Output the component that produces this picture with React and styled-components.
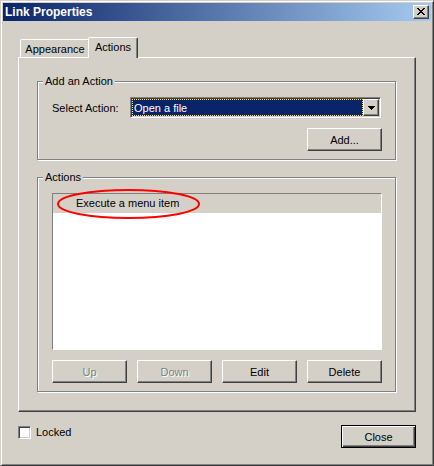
import React from 'react';
import styled, { createGlobalStyle, css } from 'styled-components';

const GlobalStyle = createGlobalStyle`
  html, body {
    margin: 0;
    padding: 0;
    background: #d4d0c8;
  }
  body {
    font-family: "Liberation Sans", Arial, sans-serif;
    font-size: 11px;
    color: #000;
  }
  * {
    box-sizing: border-box;
  }
`;

const raised = css`
  border: 1px solid;
  border-color: #fff #404040 #404040 #fff;
  box-shadow: inset -1px -1px 0 #808080;
`;

const sunken = css`
  border: 1px solid;
  border-color: #808080 #fff #fff #808080;
  box-shadow: inset 1px 1px 0 #404040, inset -1px -1px 0 #d4d0c8;
`;

const Window = styled.div`
  width: 434px;
  height: 466px;
  padding: 2px;
  background: #d4d0c8;
  border: 1px solid;
  border-color: #d4d0c8 #404040 #404040 #d4d0c8;
  box-shadow: inset 1px 1px 0 #fff, inset -1px -1px 0 #808080;
  display: flex;
  flex-direction: column;
`;

const TitleBar = styled.div`
  height: 18px;
  padding: 0 2px;
  display: flex;
  align-items: center;
  justify-content: space-between;
  background: linear-gradient(to right, #0a246a, #a6caf0);
`;

const Title = styled.span`
  color: #fff;
  font-weight: bold;
  font-size: 12px;
  line-height: 18px;
`;

const CaptionButton = styled.div`
  width: 16px;
  height: 14px;
  background: #d4d0c8;
  ${raised};
  display: flex;
  align-items: center;
  justify-content: center;
  padding-right: 1px;
  padding-bottom: 1px;
`;

const Body = styled.div`
  padding: 16px 15px 0;
  display: flex;
  flex-direction: column;
`;

const TabRow = styled.div`
  height: 20px;
  padding-left: 2px;
  display: flex;
  align-items: flex-end;
`;

const Tab = styled.div`
  position: relative;
  width: ${({ $width }) => $width}px;
  height: ${({ $active }) => ($active ? 21 : 18)}px;
  margin-bottom: ${({ $active }) => ($active ? -1 : 0)}px;
  margin-left: ${({ $active }) => ($active ? -2 : 0)}px;
  z-index: ${({ $active }) => ($active ? 2 : 1)};
  padding-bottom: ${({ $active }) => ($active ? 3 : 0)}px;
  display: flex;
  align-items: center;
  justify-content: center;
  background: #d4d0c8;
  border: 1px solid;
  border-bottom: none;
  border-color: #fff #404040 transparent #fff;
  border-radius: 2px 2px 0 0;
  box-shadow: inset -1px 0 0 #808080;
`;

const Panel = styled.div`
  height: 355px;
  padding: 23px 19px 19px 18px;
  display: flex;
  flex-direction: column;
  gap: 17px;
  background: #d4d0c8;
  ${raised};
`;

const Group = styled.div`
  position: relative;
  border: 1px solid #808080;
  box-shadow: inset 1px 1px 0 #fff, 1px 1px 0 #fff;
  padding: 15px 13px 8px 14px;
  display: flex;
  flex-direction: column;
  gap: 10px;
`;

const Legend = styled.span`
  position: absolute;
  top: -7px;
  left: 5px;
  padding: 0 2px;
  line-height: 13px;
  background: #d4d0c8;
`;

const FieldRow = styled.div`
  height: 21px;
  padding-right: 1px;
  display: flex;
  align-items: center;
`;

const FieldLabel = styled.span`
  width: 78px;
  flex: none;
`;

const Combo = styled.div`
  flex: 1;
  height: 21px;
  background: #fff;
  ${sunken};
  padding: 1px;
  display: flex;
`;

const ComboValue = styled.div`
  flex: 1;
  background: #0a246a;
  color: #fff;
  border: 1px dotted #f3e27a;
  padding-left: 1px;
  display: flex;
  align-items: center;
`;

const ComboArrow = styled.div`
  width: 16px;
  flex: none;
  background: #d4d0c8;
  ${raised};
  display: flex;
  align-items: center;
  justify-content: center;
`;

const ButtonRow = styled.div`
  display: flex;
  justify-content: ${({ $end }) => ($end ? 'flex-end' : 'flex-start')};
  gap: 10px;
`;

const Button = styled.button`
  width: 75px;
  height: 23px;
  padding: 0;
  font-family: inherit;
  font-size: 11px;
  background: #d4d0c8;
  color: ${({ disabled }) => (disabled ? '#808080' : '#000')};
  text-shadow: ${({ disabled }) => (disabled ? '1px 1px 0 #fff' : 'none')};
  ${({ $default }) =>
    $default
      ? css`
          border: 1px solid #000;
          box-shadow: inset 1px 1px 0 #fff, inset -1px -1px 0 #404040,
            inset -2px -2px 0 #808080;
        `
      : raised};
`;

const List = styled.div`
  position: relative;
  height: 157px;
  background: #fff;
  border: 1px solid;
  border-color: #808080 #fff #fff #808080;
`;

const ListItem = styled.div`
  height: 19px;
  line-height: 19px;
  padding-left: 23px;
  background: ${({ $selected }) => ($selected ? '#d4d0c8' : 'transparent')};
`;

const Callout = styled.svg`
  position: absolute;
  left: 4px;
  top: -5px;
  overflow: visible;
`;

const Footer = styled.div`
  margin-top: 13px;
  display: flex;
  justify-content: space-between;
  align-items: flex-start;
`;

const CheckRow = styled.label`
  margin-top: 1px;
  display: flex;
  align-items: center;
  gap: 5px;
  line-height: 13px;
`;

const CheckBox = styled.span`
  width: 13px;
  height: 13px;
  background: #fff;
  ${sunken};
`;

const CloseGlyph = () => (
  <svg width="8" height="7" viewBox="0 0 8 7" shapeRendering="crispEdges">
    <path
      d="M0 0h2v1h-2zM6 0h2v1h-2zM1 1h2v1h-2zM5 1h2v1h-2zM2 2h4v1h-4zM3 3h2v1h-2zM2 4h4v1h-4zM1 5h2v1h-2zM5 5h2v1h-2zM0 6h2v1h-2zM6 6h2v1h-2z"
      fill="#000"
    />
  </svg>
);

const DownArrow = () => (
  <svg width="7" height="4" viewBox="0 0 7 4" shapeRendering="crispEdges">
    <path d="M0 0h7v1h-7zM1 1h5v1h-5zM2 2h3v1h-3zM3 3h1v1h-1z" fill="#000" />
  </svg>
);

const actions = ['Execute a menu item'];

export default function App() {
  return (
    <>
      <GlobalStyle />
      <Window>
        <TitleBar>
          <Title>Link Properties</Title>
          <CaptionButton>
            <CloseGlyph />
          </CaptionButton>
        </TitleBar>

        <Body>
          <TabRow>
            <Tab $width={70}>Appearance</Tab>
            <Tab $width={50} $active>Actions</Tab>
          </TabRow>

          <Panel>
            <Group>
              <Legend>Add an Action</Legend>
              <FieldRow>
                <FieldLabel>Select Action:</FieldLabel>
                <Combo>
                  <ComboValue>Open a file</ComboValue>
                  <ComboArrow>
                    <DownArrow />
                  </ComboArrow>
                </Combo>
              </FieldRow>
              <ButtonRow $end>
                <Button>Add...</Button>
              </ButtonRow>
            </Group>

            <Group>
              <Legend>Actions</Legend>
              <List>
                {actions.map((a, i) => (
                  <ListItem key={a} $selected={i === 0}>{a}</ListItem>
                ))}
                {/* hand-drawn red callout round the first action */}
                <Callout width="143" height="30">
                  <ellipse cx="71.5" cy="15" rx="70.5" ry="14" fill="none" stroke="#ff0000" strokeWidth="2" />
                </Callout>
              </List>
              <ButtonRow>
                <Button disabled>Up</Button>
                <Button disabled>Down</Button>
                <Button>Edit</Button>
                <Button>Delete</Button>
              </ButtonRow>
            </Group>
          </Panel>

          <Footer>
            <CheckRow>
              <CheckBox />
              Locked
            </CheckRow>
            <Button $default>Close</Button>
          </Footer>
        </Body>
      </Window>
    </>
  );
}
